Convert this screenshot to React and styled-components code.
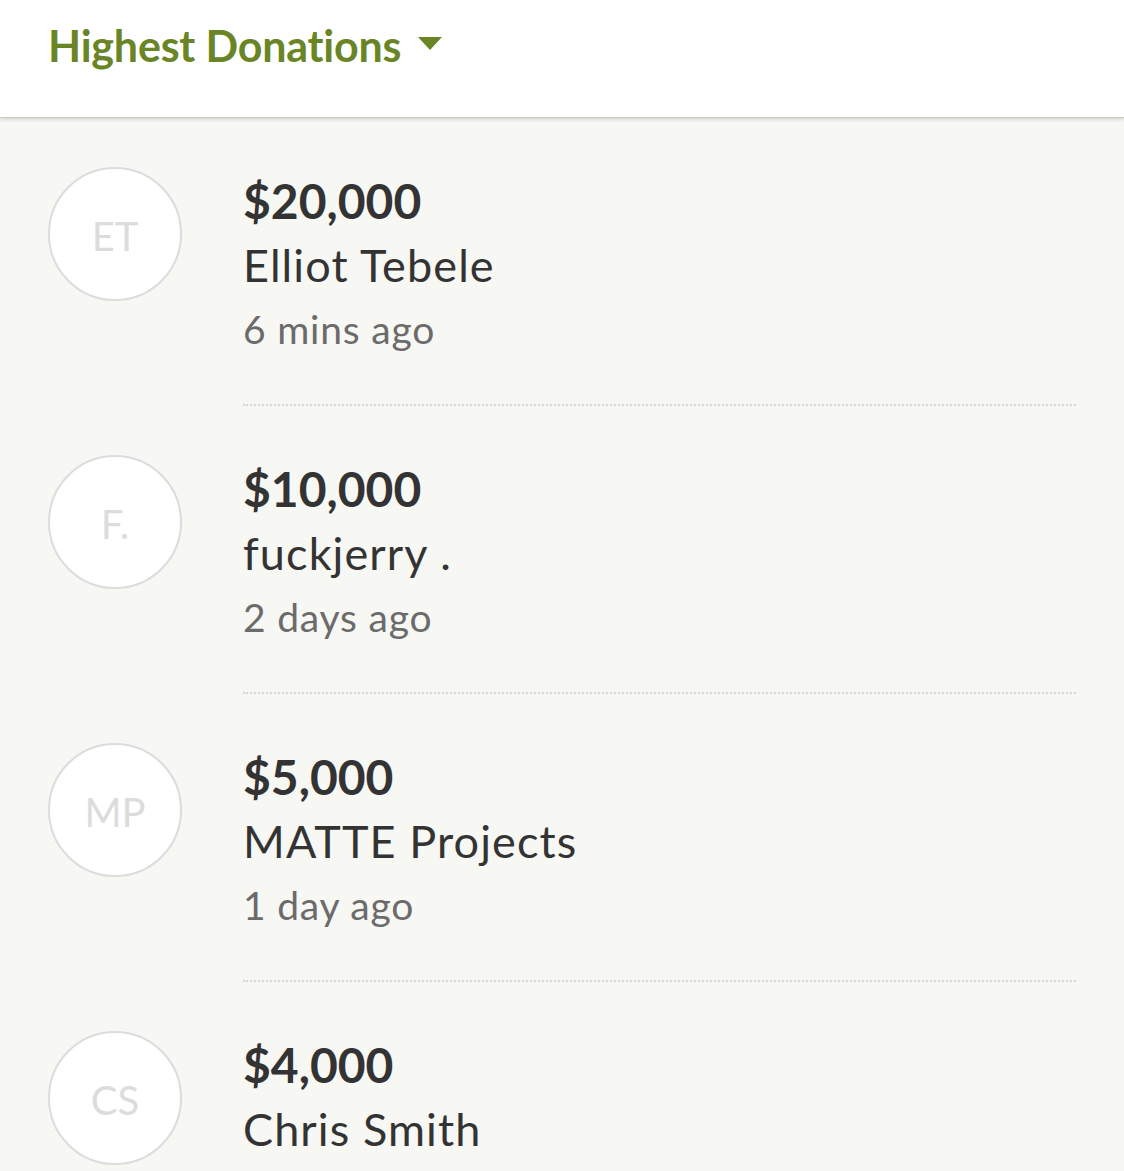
import React from "react";
import styled, { createGlobalStyle } from "styled-components";

const GlobalStyle = createGlobalStyle`
  html, body {
    margin: 0;
    padding: 0;
    background: #f7f7f3;
    font-family: Lato, "Open Sans", sans-serif;
  }
`;

const donations = [
  { initials: "ET", amount: "$20,000", name: "Elliot Tebele", time: "6 mins ago" },
  { initials: "F.", amount: "$10,000", name: "fuckjerry .", time: "2 days ago" },
  { initials: "MP", amount: "$5,000", name: "MATTE Projects", time: "1 day ago" },
  { initials: "CS", amount: "$4,000", name: "Chris Smith" },
];

export default function App() {
  return (
    <>
      <GlobalStyle />
      <Page>
        <Header>
          <SortButton>
            Highest Donations
            <Caret viewBox="0 0 24 13">
              <path d="M0 0 H24 L12 13 Z" fill="currentColor" />
            </Caret>
          </SortButton>
        </Header>
        <List>
          {donations.map((d) => (
            <Row key={d.initials}>
              <Avatar>{d.initials}</Avatar>
              <Details>
                <Amount>{d.amount}</Amount>
                <Name>{d.name}</Name>
                {d.time && <Time>{d.time}</Time>}
              </Details>
            </Row>
          ))}
        </List>
      </Page>
    </>
  );
}

const Page = styled.div`
  width: 1124px;
  height: 1171px;
  overflow: hidden;
  background: #f7f7f3;
`;

const Header = styled.header`
  height: 118px;
  background: #fff;
  border-bottom: 1px solid #c9c9c6;
  box-shadow: 0 2px 3px rgba(0, 0, 0, 0.12);
  padding-left: 48px;
  box-sizing: border-box;
  display: flex;
  align-items: flex-start;
  position: relative;
  z-index: 1;
`;

const SortButton = styled.div`
  display: flex;
  align-items: center;
  gap: 17px;
  margin-top: 19px;
  font-size: 43px;
  font-weight: 700;
  color: #6a8526;
  letter-spacing: -0.2px;
  line-height: 54px;
`;

const Caret = styled.svg`
  width: 24px;
  height: 13px;
  margin-top: -6px;
`;

const List = styled.ul`
  list-style: none;
  margin: 0;
  padding: 0 48px 0 48px;
`;

const Row = styled.li`
  display: flex;
  align-items: flex-start;
  padding-top: 49px;
`;

const Avatar = styled.div`
  flex: 0 0 auto;
  width: 130px;
  height: 130px;
  border-radius: 50%;
  border: 2px solid #dcdcdc;
  background: #fff;
  color: #dcdcdc;
  font-size: 40px;
  line-height: 1;
  padding-top: 4px;
  box-sizing: content-box;
  height: 126px;
  display: flex;
  align-items: center;
  justify-content: center;
  margin-right: 61px;
`;

const Details = styled.div`
  flex: 1;
  display: flex;
  flex-direction: column;
  padding-top: 3px;
  padding-bottom: 44px;
  border-bottom: 2px dotted #d6d6d2;
`;

const Amount = styled.div`
  font-size: 48px;
  font-weight: 700;
  color: #333;
  line-height: 62px;
`;

const Name = styled.div`
  font-size: 45px;
  color: #333;
  letter-spacing: 1.1px;
  line-height: 66px;
`;

const Time = styled.div`
  font-size: 39px;
  color: #6b6b6b;
  letter-spacing: 0.8px;
  line-height: 62px;
`;
